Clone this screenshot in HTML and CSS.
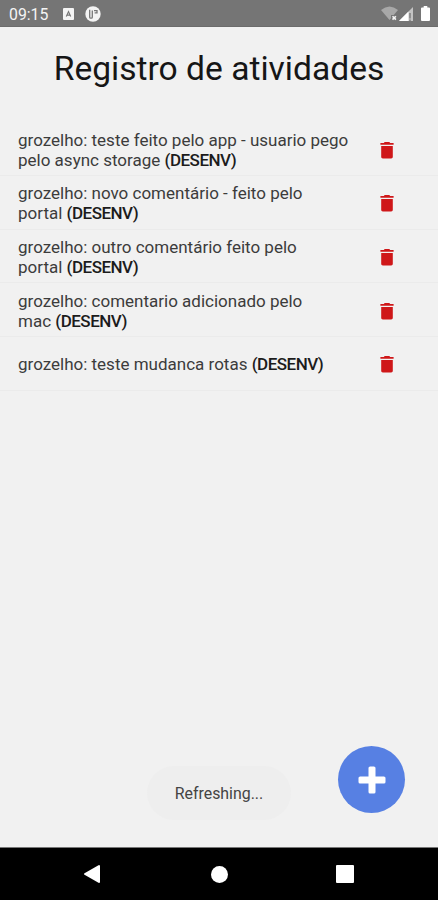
FILE: index.html
```html
<!DOCTYPE html>
<html lang="pt-BR">
<head>
  <meta charset="UTF-8" />
  <meta name="viewport" content="width=device-width, initial-scale=1.0" />
  <title>Registro de atividades</title>
  <link rel="stylesheet" href="styles.css">
</head>
<body>

  <!-- Ícone da lixeira, usado em cada linha -->
  <svg class="defs" width="0" height="0">
    <symbol id="trash" viewBox="0 0 14 18">
      <path d="M1.2 4.9h11.6v11.2q0 1.4-1.6 1.4H2.8q-1.6 0-1.6-1.4z" />
      <path d="M.4 2h3.4l.9-.9h4.6l.9.9h3.4v1.8H.4z" />
    </symbol>
  </svg>

  <div class="app">
    <header class="status-bar">
      <span class="clock">09:15</span>
      <svg class="notif-a" width="11" height="12" viewBox="0 0 11 12">
        <rect width="11" height="12" rx="1" fill="#f4f4f4" />
        <path d="M3.3 8.4 5.5 3.6 7.7 8.4M4.2 7.2h2.6" fill="none" stroke="#777" stroke-width="1.2" />
      </svg>
      <svg class="notif-p" width="16" height="16" viewBox="0 0 16 16">
        <circle cx="8" cy="8" r="7.7" fill="#f4f4f4" />
        <path d="M4.7 3.8v7.4q0 1 1 1h.6q1 0 1-1V4.6M9 4.6h3v2.2H9.6" fill="none" stroke="#777" stroke-width="1.3" />
      </svg>
      <div class="signals">
        <svg width="17" height="15" viewBox="0 0 17 15">
          <path d="M0 4Q8.5-3 17 4L8.5 14z" fill="#a8a8a8" />
          <rect x="10" y="9" width="7" height="6" fill="#757575" />
          <path d="m11.5 10.2 3.4 3.4m0-3.4-3.4 3.4" stroke="#f4f4f4" stroke-width="1.6" />
        </svg>
        <svg width="14" height="14" viewBox="0 0 14 14">
          <path d="M14 0v14H0z" fill="#c4c4c4" />
          <path d="M9.5 4.5V14H0z" fill="#fff" />
          <path d="M11 6v5.5M11 12.5V14" stroke="#757575" stroke-width="1.3" />
        </svg>
        <svg class="battery" width="9" height="15" viewBox="0 0 9 15">
          <path d="M2.7 0h3.6v1.6H8q1 0 1 1V14q0 1-1 1H1q-1 0-1-1V2.6q0-1 1-1h1.7z" fill="#fff" />
        </svg>
      </div>
    </header>

    <h1>Registro de atividades</h1>

    <ul class="list">
      <li class="item">
        <p>grozelho: teste feito pelo app - usuario pego<br>pelo async storage <b>(DESENV)</b></p>
        <svg class="trash"><use href="#trash" /></svg>
      </li>
      <li class="item">
        <p>grozelho: novo comentário - feito pelo<br>portal <b>(DESENV)</b></p>
        <svg class="trash"><use href="#trash" /></svg>
      </li>
      <li class="item">
        <p>grozelho: outro comentário feito pelo<br>portal <b>(DESENV)</b></p>
        <svg class="trash"><use href="#trash" /></svg>
      </li>
      <li class="item">
        <p>grozelho: comentario adicionado pelo<br>mac <b>(DESENV)</b></p>
        <svg class="trash"><use href="#trash" /></svg>
      </li>
      <li class="item">
        <p>grozelho: teste mudanca rotas <b>(DESENV)</b></p>
        <svg class="trash"><use href="#trash" /></svg>
      </li>
    </ul>

    <!-- Aviso e botão de adicionar -->
    <div class="toast">Refreshing...</div>
    <button class="add" aria-label="Adicionar">
      <svg width="28" height="28" viewBox="0 0 28 28" fill="#fff">
        <rect x="10.5" y=".5" width="7" height="27" rx="1.6" />
        <rect x=".5" y="10.5" width="27" height="7" rx="1.6" />
      </svg>
    </button>

    <nav class="nav-bar">
      <svg width="18" height="20" viewBox="0 0 18 20">
        <path d="M16 2v16L2 10z" fill="#fff" stroke="#fff" stroke-width="2" stroke-linejoin="round" />
      </svg>
      <span class="home"></span>
      <span class="recent"></span>
    </nav>
  </div>

</body>
</html>
```

FILE: styles.css
```css
* {
  box-sizing: border-box;
}

body, html {
  margin: 0;
  padding: 0;
  height: 100%;
  overflow: hidden;
  font-family: Roboto, sans-serif;
  background: #f1f1f1;
}

.defs {
  display: none;
}

.app {
  position: relative;
  display: flex;
  flex-direction: column;
  height: 900px;
}

/* Barra de status */
.status-bar {
  display: flex;
  align-items: center;
  height: 27px;
  padding: 1px 8px 0 9px;
  background: #757575;
  border-bottom: 1px solid #6c6c6c;
  color: #f4f4f4;
}

.clock {
  width: 54px;
  padding-top: 1px;
  font-size: 15.8px;
}

.notif-p {
  margin-left: 11px;
}

.signals {
  display: flex;
  align-items: center;
  gap: 1px;
  margin-left: auto;
}

.battery {
  margin-left: 7px;
}

h1 {
  margin: 0;
  height: 95.4px;
  padding-top: 21px;
  font-size: 33.6px;
  font-weight: 400;
  line-height: 42px;
  text-align: center;
  color: #161616;
}

/* Lista de comentários */
.list {
  flex: 1;
  margin: 0;
  padding: 0;
  list-style: none;
}

.item {
  display: flex;
  align-items: center;
  justify-content: space-between;
  height: 53.7px;
  padding: 2px 44px 0 18px;
  border-bottom: 1px solid #ebebeb;
}

.item p {
  margin: 0;
  font-size: 17px;
  line-height: 20px;
  white-space: nowrap;
  color: #3c3c3c;
}

.item b {
  font-weight: 500;
  letter-spacing: -0.5px;
  color: #1c1c1c;
}

.trash {
  width: 14px;
  height: 18px;
  fill: #cf1719;
}

.toast {
  position: absolute;
  left: 147px;
  top: 766px;
  width: 144px;
  height: 54px;
  border-radius: 27px;
  background: #eeeeee;
  font-size: 15.9px;
  line-height: 56px;
  text-align: center;
  color: #444;
}

.add {
  position: absolute;
  right: 33px;
  top: 746px;
  display: flex;
  align-items: center;
  justify-content: center;
  width: 67px;
  height: 67px;
  padding: 0;
  border: none;
  border-radius: 50%;
  background: #5780e3;
}

/* Botões do sistema */
.nav-bar {
  display: flex;
  align-items: center;
  justify-content: space-between;
  height: 53px;
  padding: 0 84px 0 83px;
  background: #000;
  border-top: 1px solid #777;
}

.home {
  width: 17px;
  height: 17px;
  margin-left: 2px;
  border-radius: 50%;
  background: #fff;
}

.recent {
  width: 18px;
  height: 18px;
  border-radius: 1px;
  background: #fff;
}
```
